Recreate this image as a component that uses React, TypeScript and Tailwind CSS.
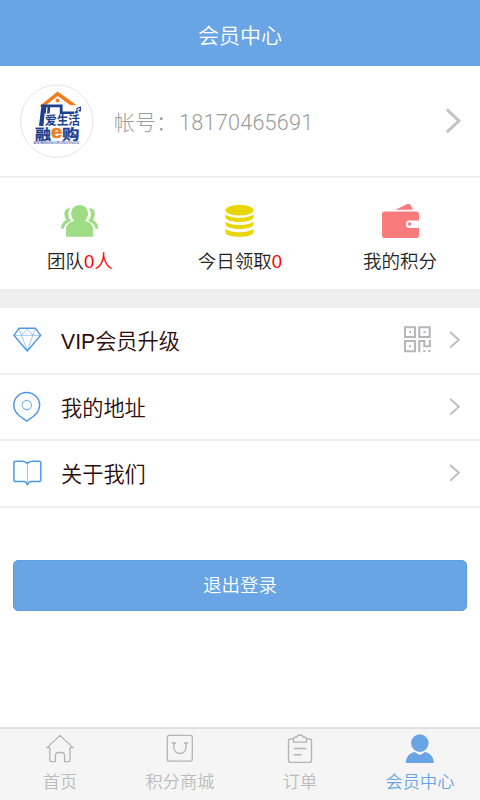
import type { ReactNode } from 'react'

const BLUE = '#69a5e4'
const LINE_BLUE = '#4f98e6'
const GREY = '#b4b4b4'

function Logo() {
  return (
    <svg width="74" height="74" viewBox="20 84 74 74" className="shrink-0">
      <circle cx="56.7" cy="121.2" r="36.2" fill="#fff" stroke="#e4e4e4" />
      <path d="M39.3 106.2 57.6 91.4 76.8 105.2H70.6L57.7 95.9 45.8 105.2V106.2Z" fill="#f07c1e" />
      <circle cx="57.6" cy="100.6" r="2" fill="#f07c1e" />
      <path d="M41 104.4H62.6V111.4H74.4V114H59.8V107.2H50.2L49.6 113.6H44.6L43.4 126H39L41.2 107.2Z" fill="#1d3f8f" />
      <path d="M47 107.2 46.4 113.6" stroke="#fff" strokeWidth="1.2" />
      <path d="M77 112.2V108.4L80.4 107V110.4" fill="none" stroke="#1d3f8f" strokeWidth="1.1" />
      <circle cx="76.4" cy="112.2" r="1.4" fill="#1d3f8f" />
      <circle cx="79.8" cy="110.4" r="1.2" fill="#1d3f8f" />
      <g fontFamily='"Noto Sans CJK SC", sans-serif' fontWeight="700" fill="#1d3f8f">
        <text x="45" y="125" fontSize="12" textLength="35" lengthAdjust="spacingAndGlyphs">爱生活</text>
        <text x="35" y="138.6" fontSize="13.5" textLength="16" lengthAdjust="spacingAndGlyphs" stroke="#1d3f8f" strokeWidth="0.3">融</text>
        <text x="62" y="138.6" fontSize="13.5" textLength="17.4" lengthAdjust="spacingAndGlyphs" stroke="#1d3f8f" strokeWidth="0.3">购</text>
      </g>
      <text x="51" y="138.4" fontSize="18.5" fontWeight="700" textLength="11" lengthAdjust="spacingAndGlyphs" fontFamily='"Liberation Sans", sans-serif' fill="#f07c1e" stroke="#f07c1e" strokeWidth="0.6">e</text>
      <text x="33.6" y="144" fontSize="3.8" fontWeight="700" textLength="45.6" lengthAdjust="spacingAndGlyphs" fontFamily='"Liberation Sans", sans-serif' fill="#5a72ad">AISHENGHUORONGYIGOU</text>
    </svg>
  )
}

function TeamIcon() {
  return (
    <svg width="40" height="34" viewBox="60 204 40 34" fill="#9fdc86">
      <path d="M70.2 208.2C66.2 207.6 64.2 210.8 64.4 214.2C64.5 216.5 65.2 218.5 66.4 219.8C63 221.8 61 224.5 61 228.8H63.8C64.4 225.6 66 223.4 70 221.6C71 221.2 71.2 220.6 70.6 220C68.8 218.2 68.4 216.4 68.4 214C68.4 211.5 69.2 209.8 70.2 208.2Z" />
      <path d="M89 208.2C93 207.6 95 210.8 94.8 214.2C94.7 216.5 94 218.5 92.8 219.8C96.2 221.8 98.2 224.5 98.2 228.8H95.4C94.8 225.6 93.2 223.4 89.2 221.6C88.2 221.2 88 220.6 88.6 220C90.4 218.2 90.8 216.4 90.8 214C90.8 211.5 90 209.8 89 208.2Z" />
      <path d="M79.6 205C84.7 205 88 208.8 88 213.5C88 216.8 86.7 219.6 84.6 221.1C90.5 222.3 93.2 225.3 93.2 230V236.8H66V230C66 225.3 68.7 222.3 74.6 221.1C72.5 219.6 71.2 216.8 71.2 213.5C71.2 208.8 74.5 205 79.6 205Z" stroke="#fff" strokeWidth="1.6" paintOrder="stroke" />
    </svg>
  )
}

function CoinsIcon() {
  return (
    <svg width="40" height="34" viewBox="219.8 204 40 34" fill="#e9d600">
      <ellipse cx="239.3" cy="210.2" rx="14" ry="5.4" />
      <path d="M225.3 214C229 219 249.6 219 253.3 214V217.6C252 223.6 226.6 223.6 225.3 217.6Z" />
      <path d="M225.3 221.2C229 226.2 249.6 226.2 253.3 221.2V224.4C252 230.4 226.6 230.4 225.3 224.4Z" />
      <path d="M225.3 228.4C229 233.4 249.6 233.4 253.3 228.4V232.4C252 238.2 226.6 238.2 225.3 232.4Z" />
    </svg>
  )
}

function WalletIcon() {
  return (
    <svg width="40" height="36" viewBox="380 203 40 36" fill="#f97b7b">
      <path d="M395.5 209.8 406.8 204.3C408.4 203.5 409.8 203.9 410.8 205.3L413 209.8Z" />
      <path d="M384.8 211.4H416.2Q419 211.4 419 214.2V220.5H409.5A3.5 3.5 0 0 0 409.5 227.9H419V235.2Q419 238 416.2 238H384.8Q382 238 382 235.2V214.2Q382 211.4 384.8 211.4Z" />
      <circle cx="409.6" cy="224" r="1.7" />
    </svg>
  )
}

function Chevron({ large }: { large?: boolean }) {
  return large ? (
    <svg width="18" height="28" viewBox="444 107 18 28" fill="none" stroke="#c3c3c8" strokeWidth="3">
      <path d="M446.8 109.4 459 120.8 446.8 132.2" />
    </svg>
  ) : (
    <svg width="14" height="20" viewBox="448 330 14 20" fill="none" stroke="#bcbcc1" strokeWidth="1.9">
      <path d="M450.2 332 458.8 339.8 450.2 347.6" />
    </svg>
  )
}

function DiamondIcon() {
  return (
    <svg width="30" height="28" viewBox="12 326 30 28" fill="none" stroke={LINE_BLUE} strokeLinejoin="round">
      <path d="M19 328.3H35.5L40.7 335.3 27.3 351 13.9 335.3Z" strokeWidth="1.4" />
      <path d="M14 335.3H40.6M19 328.5 21.5 335.3 27.3 328.8 33 335.3 35.5 328.5M21.5 335.3 27.3 350.5 33 335.3" strokeWidth="0.9" opacity="0.6" />
    </svg>
  )
}

function PinIcon() {
  return (
    <svg width="30" height="32" viewBox="12 391 30 32" fill="none" stroke={LINE_BLUE}>
      <path d="M26.7 392.6C34 392.6 39.6 398.2 39.6 405.2C39.6 409.2 37.5 412.8 33.8 416L26.7 421 19.6 416C15.9 412.8 13.8 409.2 13.8 405.2C13.8 398.2 19.4 392.6 26.7 392.6Z" strokeWidth="1.5" />
      <circle cx="26.8" cy="405" r="4.6" strokeWidth="1.1" opacity="0.75" />
    </svg>
  )
}

function BookIcon() {
  return (
    <svg width="30" height="30" viewBox="12 458 30 30" fill="none" stroke={LINE_BLUE} strokeLinejoin="round">
      <path d="M27.4 463.5C26 461.7 24.4 461.2 22.5 461.2H15.8Q13.9 461.2 13.9 463.2V479.7Q13.9 481.5 15.8 481.5H24C26 481.5 26.5 482.2 27.4 484.8C28.3 482.2 28.8 481.5 30.8 481.5H39Q40.8 481.5 40.8 479.7V463.2Q40.8 461.2 39 461.2H32.3C30.4 461.2 28.8 461.7 27.4 463.5Z" strokeWidth="1.5" />
      <path d="M27.4 463.5V482" strokeWidth="1" opacity="0.65" />
    </svg>
  )
}

function QrIcon() {
  return (
    <svg width="28" height="28" viewBox="404 327 28 28" fill="none" stroke="#b6b6bb" strokeWidth="2.1">
      <path d="M405 328.2H415V338H405ZM419.3 328.2H429.7V338H419.3ZM405 342H415V352.2H405Z" />
      <path d="M419.3 353.2V342H424.3V347.3H429.9V341" />
      <path d="M409 333H411M423.5 333H425.5M409 347.2H411M423.3 352H425.3M428.2 352H430.4" />
    </svg>
  )
}

function HomeIcon() {
  return (
    <svg width="30" height="30" viewBox="45 733 30 30" fill="none" stroke={GREY} strokeWidth="1.3" strokeLinejoin="round">
      <path d="M60 735.4 73 747.6H70V760.2Q70 761.6 68.6 761.6H64.6V756Q64.6 752.5 61.5 752.5H58.5Q55.4 752.5 55.4 756V761.6H51.2Q49.8 761.6 49.8 760.2V747.6H47Z" />
    </svg>
  )
}

function MallIcon() {
  return (
    <svg width="30" height="30" viewBox="165 733 30 30" fill="none" stroke={GREY} strokeWidth="1.3">
      <rect x="167.3" y="735.4" width="25" height="25.8" rx="2" />
      <path d="M171.6 743H176M183.8 743H188.2M173.8 743V747.4A6.1 6.1 0 0 0 186 747.4V743" />
    </svg>
  )
}

function OrderIcon() {
  return (
    <svg width="30" height="30" viewBox="285 733.5 30 30" fill="none" stroke={GREY} strokeWidth="1.4" strokeLinejoin="round">
      <path d="M293.5 739.5H290.6Q288.5 739.5 288.5 741.6V760.8Q288.5 763 290.6 763H309.4Q311.5 763 311.5 760.8V741.6Q311.5 739.5 309.4 739.5H306.5" />
      <path d="M293.5 742.6V738.9Q293.5 737.7 294.8 737.7H296.2C297.2 736.4 298.4 735.5 300 735.5C301.6 735.5 302.8 736.4 303.8 737.7H305.2Q306.5 737.7 306.5 738.9V742.6Z" />
      <path d="M293.7 749H306.4M293.7 755.3H301.6" />
    </svg>
  )
}

function MemberIcon() {
  return (
    <svg width="30" height="30" viewBox="405 733.2 30 30" fill={BLUE}>
      <circle cx="419.8" cy="743.3" r="8.8" />
      <path d="M405.8 763.2C406 756.6 409.5 753.2 414.8 752.2C416 753.2 418.4 755 419.8 755C421.2 755 423.6 753.2 424.8 752.2C430.1 753.2 433.6 756.6 433.8 763.2Z" />
    </svg>
  )
}

interface MenuItem {
  label: string
  icon: ReactNode
  qr?: boolean
}

const STATS = [
  { label: '团队', value: '0人', icon: <TeamIcon /> },
  { label: '今日领取', value: '0', icon: <CoinsIcon /> },
  { label: '我的积分', value: '', icon: <WalletIcon /> },
]

const MENU: MenuItem[] = [
  { label: 'VIP会员升级', icon: <DiamondIcon />, qr: true },
  { label: '我的地址', icon: <PinIcon /> },
  { label: '关于我们', icon: <BookIcon /> },
]

const TABS = [
  { label: '首页', icon: <HomeIcon /> },
  { label: '积分商城', icon: <MallIcon /> },
  { label: '订单', icon: <OrderIcon /> },
  { label: '会员中心', icon: <MemberIcon />, active: true },
]

export default function App() {
  return (
    <div className="flex h-[800px] w-[480px] flex-col overflow-hidden bg-white font-['Liberation_Sans','Noto_Sans_CJK_SC',sans-serif] leading-none">
      <header className="flex h-[66px] shrink-0 items-center justify-center bg-[#69a5e4] pt-[5px] text-[21px] font-[350] text-white">
        会员中心
      </header>

      <section className="flex h-[112px] shrink-0 items-center border-b-2 border-[#efefef] pr-[18px] pl-5">
        <Logo />
        <div className="ml-5 flex-1 pt-[3px] font-[Roboto,'Noto_Sans_CJK_SC',sans-serif] text-[21px] font-light whitespace-nowrap text-[#9c9c9c]">
          帐号：<span className="ml-[2px] text-[21.7px] tracking-[0.2px]">18170465691</span>
        </div>
        <Chevron large />
      </section>

      <section className="grid h-[111px] shrink-0 grid-cols-3">
        {STATS.map((s) => (
          <div key={s.label} className="flex flex-col items-center pt-[25px]">
            <div className="flex h-9 items-center">{s.icon}</div>
            <div className="mt-[14px] text-[18.5px] font-[350] text-[#222]">
              {s.label}
              {s.value && <span className="text-[#ff0000]">{s.value}</span>}
            </div>
          </div>
        ))}
      </section>

      <div className="h-[19px] shrink-0 bg-[#efefef]" />

      <nav className="shrink-0">
        {MENU.map((m) => (
          <div key={m.label} className="flex h-[66.5px] items-center border-b-2 border-[#efefef] pr-[18px] pl-3">
            {m.icon}
            <span className="ml-[19px] flex-1 pt-[3px] text-[21.2px] font-[350] text-[#2b0b0b]">{m.label}</span>
            {m.qr && <span className="mr-4"><QrIcon /></span>}
            <Chevron />
          </div>
        ))}
      </nav>

      <button className="mx-[13px] mt-[52px] h-[51px] shrink-0 rounded-[5px] border border-[#5b9de2] bg-[#69a5e4] pt-[3px] text-[18.5px] font-[350] text-white">
        退出登录
      </button>

      <footer className="mt-auto grid h-[73px] shrink-0 grid-cols-4 border-t-2 border-[#e0e0e0] bg-[#f5f5f5]">
        {TABS.map((t) => (
          <div key={t.label} className="flex flex-col items-center pt-1">
            {t.icon}
            <span className={`mt-[11px] text-[17.2px] font-[350] ${t.active ? 'text-[#69a5e4]' : 'text-[#bcbcbc]'}`}>
              {t.label}
            </span>
          </div>
        ))}
      </footer>
    </div>
  )
}
